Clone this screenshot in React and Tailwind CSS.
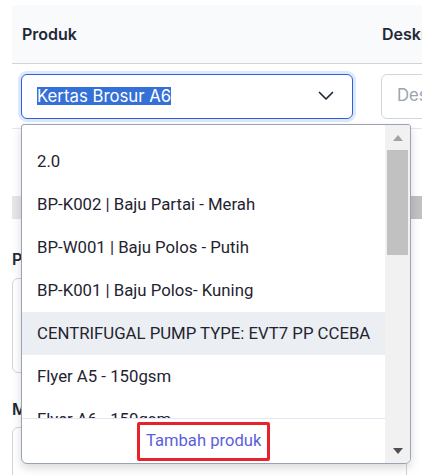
import { useState } from 'react'

const options = [
  '2.0',
  'BP-K002 | Baju Partai - Merah',
  'BP-W001 | Baju Polos - Putih',
  'BP-K001 | Baju Polos- Kuning',
  'CENTRIFUGAL PUMP TYPE: EVT7 PP CCEBA',
  'Flyer A5 - 150gsm',
  'Flyer A6 - 150gsm',
]

function Arrow({ up, color }) {
  return (
    <svg width="10" height="6" viewBox="0 0 10 6" aria-hidden="true">
      <polygon points={up ? '0,6 5,0 10,6' : '0,0 10,0 5,6'} fill={color} />
    </svg>
  )
}

export default function App() {
  const [active] = useState(4)

  return (
    <div className="relative h-[475px] w-[422px] overflow-hidden bg-white pl-[12px] pt-[5px] font-['Inter',sans-serif] text-[16px] text-[#1f2937]">
      {/* table */}
      <div className="w-[600px]">
        <div className="flex h-[59px] items-center border-b border-[#d1d5db] bg-[#f9fafb] font-semibold text-[#1f2937]">
          <div className="w-[359px] pl-[10px]">Produk</div>
          <div className="pl-[11px]">Deskripsi</div>
        </div>
        <div className="flex h-[65px] items-center border-b border-[#e5e7eb]">
          <div className="w-[359px] pl-[9px]">
            <div className="flex h-[45px] w-[332px] items-center justify-between rounded-md border border-[#2d5fd8] bg-white pl-[15px] pr-[18px] ring-[3px] ring-[#dce8fb]">
              <span className="bg-[#3570d8] text-[16.75px] leading-[18px] text-white">Kertas Brosur A6</span>
              <svg width="16" height="10" viewBox="0 0 16 10" fill="none" aria-hidden="true">
                <path d="M1.5 1.5 8 8l6.5-6.5" stroke="#1f2937" strokeWidth="1.7" strokeLinecap="round" strokeLinejoin="round" />
              </svg>
            </div>
          </div>
          <div className="pl-[10px]">
            <div className="flex h-[45px] w-[200px] items-center rounded-md border border-[#d1d5db] pl-[15px] text-[16.75px] text-[#9ca3af]">
              Deskripsi
            </div>
          </div>
        </div>
      </div>

      <div className="mt-[67px] flex h-[23px]">
        <div className="w-[398px] bg-[#e6e6e6]" />
        <div className="flex-1 bg-[#c1c1c1]" />
      </div>

      {/* form below */}
      <div className="w-[395px]">
        <div className="mt-[28px] font-semibold leading-6">Produk</div>
        <div className="mt-[7px] h-[95px] rounded-md border border-[#d1d5db]" />
        <div className="mt-[24px] font-semibold leading-6">Media</div>
        <div className="mt-[6px] h-[60px] rounded-md border border-[#d1d5db]" />
      </div>

      {/* dropdown */}
      <div className="absolute left-[21px] top-[124px] flex h-[340px] w-[390px] overflow-hidden rounded-b-md rounded-t-[3px] border border-[#9aa3b5] bg-white font-['Roboto',sans-serif] text-[16.75px] text-[#1f2430] shadow-[0_4px_10px_rgba(0,0,0,0.15)]">
        <div className="flex flex-1 flex-col">
          <div className="flex-1 overflow-hidden pt-[15px]">
            {options.map((o, i) => (
              <div
                key={o}
                className={`flex h-[43px] items-center whitespace-nowrap px-[15px] ${i === active ? 'bg-[#ebeef2]' : ''}`}
              >
                {o}
              </div>
            ))}
          </div>
          <div className="flex h-[45px] items-center justify-center border-t border-[#e4e4f2]">
            <div className="flex h-[39px] items-center rounded-[2px] border-[3px] border-[#e8212b] px-[6px] text-[16.6px] text-[#5a60dc]">
              Tambah produk
            </div>
          </div>
        </div>
        <div className="flex w-[25px] flex-col bg-[#f1f1f1]">
          <div className="flex h-[25px] items-center justify-center">
            <Arrow up color="#a3a3a3" />
          </div>
          <div className="mx-[2px] h-[105px] bg-[#c1c1c1]" />
          <div className="flex-1" />
          <div className="flex h-[25px] items-center justify-center">
            <Arrow color="#505050" />
          </div>
        </div>
      </div>
    </div>
  )
}
